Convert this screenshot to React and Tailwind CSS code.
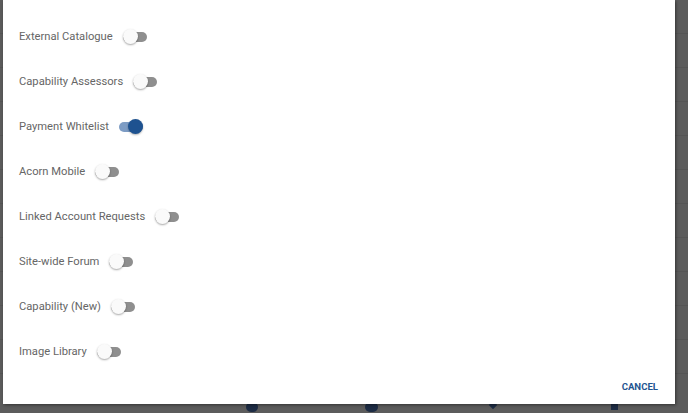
const FEATURES = [
  { label: 'External Catalogue', on: false },
  { label: 'Capability Assessors', on: false },
  { label: 'Payment Whitelist', on: true },
  { label: 'Acorn Mobile', on: false },
  { label: 'Linked Account Requests', on: false },
  { label: 'Site-wide Forum', on: false },
  { label: 'Capability (New)', on: false },
  { label: 'Image Library', on: false },
];

function Toggle({ on }) {
  return (
    <span className="relative inline-flex items-center w-[24px] h-[16px] shrink-0">
      <span className={`absolute left-0 right-0 h-[10px] rounded-full ${on ? 'bg-[#7d9cc4]' : 'bg-[#8f8f8f]'}`} />
      <span
        className={`absolute top-[0.5px] w-[15px] h-[15px] rounded-full ${
          on ? 'left-[9px] bg-[#1e5290] shadow-[0_1px_2px_rgba(0,0,0,0.3)]' : 'left-0 bg-[#fafafa] shadow-[0_1px_2px_rgba(0,0,0,0.35)]'
        }`}
      />
    </span>
  );
}

export default function App() {
  return (
    <div className="w-[688px] h-[413px] bg-[#5c5c5c] overflow-hidden relative font-['Roboto',sans-serif]">
      {/* page peeking out under the dialog */}
      <div className="absolute inset-0 flex flex-col">
        {[0, 1, 2, 3, 4, 5, 6, 7, 8, 9, 10].map((i) => (
          <div key={i} className="h-[34px] border-b border-[#555555]" />
        ))}
      </div>
      <div className="absolute top-[402px] left-0 right-0 flex">
        <span className="ml-[246px] w-[12px] h-[10px] rounded-full bg-[#1d2c44]" />
        <span className="ml-[107px] w-[13px] h-[10px] rounded-full bg-[#1d2c44]" />
        <span className="ml-[112px] w-[6px] h-[6px] rotate-45 bg-[#1d2c44]" />
        <span className="ml-[115px] w-[7px] h-[8px] bg-[#1d2c44]" />
      </div>

      <div className="relative ml-[3px] w-[672px] h-[404px] bg-white shadow-[1px_1px_3px_rgba(0,0,0,0.45)] flex flex-col">
        <div className="flex flex-col pt-[14px] pl-[16px]">
          {FEATURES.map((f) => (
            <div key={f.label} className="h-[45px] flex items-center gap-[10px]">
              <span className="text-[11.2px] text-[#666666] leading-none">{f.label}</span>
              <Toggle on={f.on} />
            </div>
          ))}
        </div>
        <div className="flex-1 flex items-end justify-end pr-[17px] pb-[12px]">
          <button className="text-[9.6px] font-bold text-[#1f5591] leading-none">CANCEL</button>
        </div>
      </div>
    </div>
  );
}
